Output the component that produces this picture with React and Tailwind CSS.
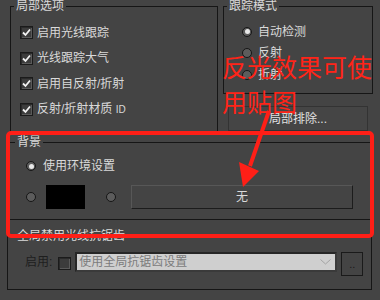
const FONT = "font-['Liberation_Sans','Noto_Sans_CJK_SC',sans-serif]";

function Check({ checked }) {
  return (
    <span className="flex h-[13px] w-[13px] shrink-0 items-center justify-center border border-[#1b1b1b] bg-[#3c3c3c] shadow-[inset_1px_1px_0_#2a2a2a,inset_-1px_-1px_0_#5a5a5a]">
      {checked && (
        <svg width="9" height="9" viewBox="0 0 9 9">
          <path d="M1 4.5 L3.5 7 L8 1.5" fill="none" stroke="#f2f2f2" strokeWidth="1.8" />
        </svg>
      )}
    </span>
  );
}

function Radio({ on }) {
  return (
    <span className="flex h-[10px] w-[10px] shrink-0 items-center justify-center rounded-full border-[1.5px] border-[#161616] bg-[#5c5c5c]">
      {on && <span className="h-[5px] w-[5px] rounded-full bg-[#e8e8e8]" />}
    </span>
  );
}

function Group({ title, titleLeft, className, children }) {
  return (
    <div className={`relative border border-[#161616] ${className}`}>
      <span className={`absolute -top-[8px] ${titleLeft} bg-[#444444] px-[2px] text-[12px] leading-[14px] text-[#dadada]`}>
        {title}
      </span>
      {children}
    </div>
  );
}

export default function App() {
  const opts = ['启用光线跟踪', '光线跟踪大气', '启用自反射/折射'];

  return (
    <div className={`relative h-[300px] w-[380px] overflow-hidden bg-[#444444] ${FONT}`}>
      {/* top row */}
      <div className="flex pl-[10px] pt-[6px]">
        <Group title="局部选项" titleLeft="left-[3px]" className="h-[128px] w-[208px]">
          <div className="flex flex-col pl-[9px] pt-[13px]">
            {opts.map((o) => (
              <div key={o} className="flex h-[25.5px] items-center gap-[4px] text-[12px] text-[#dadada]">
                <Check checked />
                <span>{o}</span>
              </div>
            ))}
            <div className="flex h-[25.5px] items-center gap-[4px] text-[12px] text-[#dadada]">
              <Check checked />
              <span>
                反射/折射材质 <span className="text-[10px]">ID</span>
              </span>
            </div>
          </div>
        </Group>

        <div className="ml-[5px] flex w-[150px] flex-col">
          <Group title="跟踪模式" titleLeft="left-[3px]" className="h-[88px]">
            <div className="flex flex-col pl-[18px] pt-[14px]">
              {[['自动检测', true], ['反射', false], ['折射', false]].map(([t, on]) => (
                <div key={t} className="flex h-[21.5px] items-center gap-[6px] text-[12px] text-[#dadada]">
                  <Radio on={on} />
                  <span>{t}</span>
                </div>
              ))}
            </div>
          </Group>
          <button className="mx-[5px] mt-[12px] flex h-[25px] items-center justify-center border border-[#333333] bg-[#454545] text-[12px] text-[#e0e0e0]">
            局部排除...
          </button>
        </div>
      </div>

      {/* background */}
      <Group title="背景" titleLeft="left-[6px]" className="ml-[8px] mt-[8px] h-[78px] w-[364px]">
        <div className="flex flex-col pl-[17px] pt-[16px]">
          <div className="flex h-[14px] items-center gap-[7px] text-[12px] text-[#dadada]">
            <Radio on />
            <span>使用环境设置</span>
          </div>
          <div className="mt-[12px] flex h-[24px] items-center">
            <Radio />
            <span className="ml-[10px] h-[24px] w-[39px] bg-black" />
            <span className="ml-[21px]">
              <Radio />
            </span>
            <button className="ml-[15px] flex h-[24px] w-[222px] items-center justify-center border border-[#1c1c1c] border-l-[#575757] border-t-[#575757] bg-[#444444] text-[12px] text-[#dadada]">
              无
            </button>
          </div>
        </div>
      </Group>

      {/* global antialias */}
      <Group title="全局禁用光线抗锯齿" titleLeft="left-[7px]" className="ml-[7px] mt-[16px] h-[54px] w-[365px]">
        <div className="flex items-start pl-[17px] pt-[15px] text-[12px]">
          <span className="mt-[3px] leading-[14px] text-[#1e1e1e]">启用:</span>
          <span className="ml-[6px] mt-[5px]">
            <Check />
          </span>
          <div className="ml-[4px] flex h-[20px] w-[262px] items-center justify-between border-2 border-[#262626] border-b-[#3a3a3a] border-r-[#3a3a3a] bg-[#cfcfcf] pl-[2px] pr-[4px] text-[#7c7c7c]">
            <span>使用全局抗锯齿设置</span>
            <svg width="11" height="6" viewBox="0 0 11 6">
              <path d="M0.5 0.5 L5.5 5 L10.5 0.5" fill="none" stroke="#a3a3a3" strokeWidth="1" />
            </svg>
          </div>
          <button className="ml-[4px] flex h-[24px] w-[22px] items-center justify-center border border-[#1a1a1a] bg-[#444444] text-[11px] leading-none text-[#1a1a1a]">
            ..
          </button>
        </div>
      </Group>

      {/* annotation overlay */}
      <div className="absolute left-[6px] top-[131px] h-[107px] w-[368px] rounded-[5px] border-4 border-[#ff1f17]" />
      <div className="absolute left-[222px] top-[51px] text-[25px] leading-[35px] text-[#ff2418]">
        <div>反光效果可使</div>
        <div>用贴图</div>
      </div>
      <svg className="absolute left-0 top-0" width="380" height="300" viewBox="0 0 380 300">
        <path d="M269 111 L250 166" stroke="#ff1f17" strokeWidth="4" fill="none" />
        <polygon points="239,162 259,171 243,187" fill="#ff1f17" />
      </svg>
    </div>
  );
}
